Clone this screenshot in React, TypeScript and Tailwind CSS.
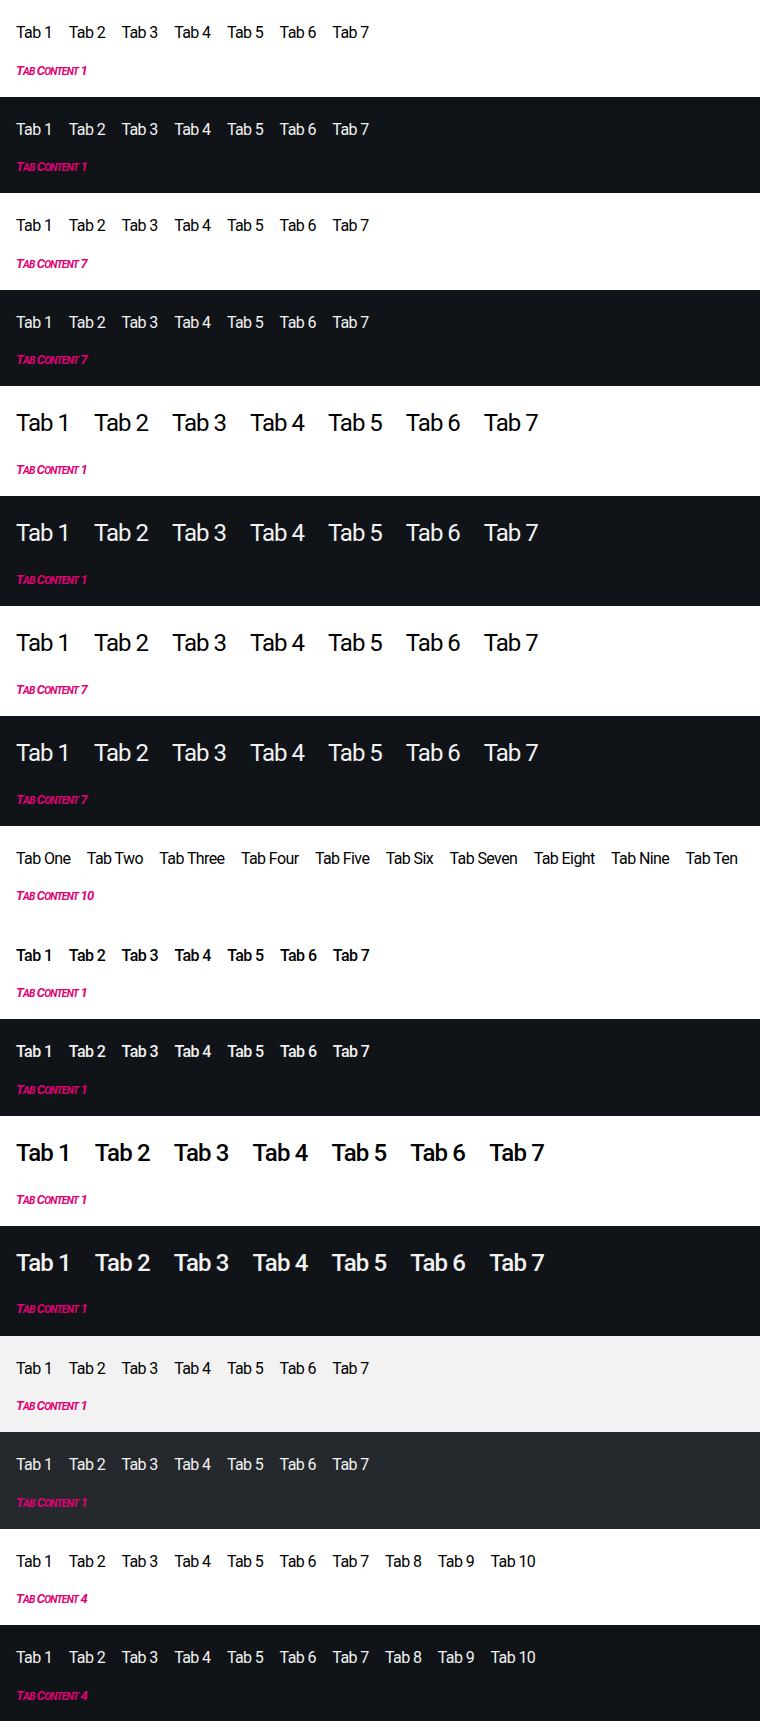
import React from "react";

type Variant = {
  bg: string;
  text: string;
  large?: boolean;
  bold?: boolean;
  labels: string[];
  content: string;
};

const seven = ["Tab 1", "Tab 2", "Tab 3", "Tab 4", "Tab 5", "Tab 6", "Tab 7"];
const ten = [...seven, "Tab 8", "Tab 9", "Tab 10"];
const words = [
  "Tab One",
  "Tab Two",
  "Tab Three",
  "Tab Four",
  "Tab Five",
  "Tab Six",
  "Tab Seven",
  "Tab Eight",
  "Tab Nine",
  "Tab Ten",
];

const LIGHT = "bg-white";
const DARK = "bg-[#101418]";
const LT = "text-[#000000]";
const DT = "text-[#f2f2f2]";

const sections: Variant[] = [
  { bg: LIGHT, text: LT, labels: seven, content: "Tab Content 1" },
  { bg: DARK, text: DT, labels: seven, content: "Tab Content 1" },
  { bg: LIGHT, text: LT, labels: seven, content: "Tab Content 7" },
  { bg: DARK, text: DT, labels: seven, content: "Tab Content 7" },
  { bg: LIGHT, text: LT, large: true, labels: seven, content: "Tab Content 1" },
  { bg: DARK, text: DT, large: true, labels: seven, content: "Tab Content 1" },
  { bg: LIGHT, text: LT, large: true, labels: seven, content: "Tab Content 7" },
  { bg: DARK, text: DT, large: true, labels: seven, content: "Tab Content 7" },
  { bg: LIGHT, text: LT, labels: words, content: "Tab Content 10" },
  { bg: LIGHT, text: LT, bold: true, labels: seven, content: "Tab Content 1" },
  { bg: DARK, text: DT, bold: true, labels: seven, content: "Tab Content 1" },
  { bg: LIGHT, text: LT, bold: true, large: true, labels: seven, content: "Tab Content 1" },
  { bg: DARK, text: DT, bold: true, large: true, labels: seven, content: "Tab Content 1" },
  { bg: "bg-[#f2f2f2]", text: LT, labels: seven, content: "Tab Content 1" },
  { bg: "bg-[#25292d]", text: DT, labels: seven, content: "Tab Content 1" },
  { bg: LIGHT, text: LT, labels: ten, content: "Tab Content 4" },
  { bg: DARK, text: DT, labels: ten, content: "Tab Content 4" },
];

function SmallCaps({ text }: { text: string }) {
  const parts: React.ReactNode[] = [];
  let buf = "";
  let key = 0;
  const flush = () => {
    if (buf) {
      parts.push(
        <span key={key++} className="text-[10.4px] leading-none">
          {buf.toUpperCase()}
        </span>
      );
      buf = "";
    }
  };
  for (const ch of text) {
    if (ch >= "a" && ch <= "z") {
      buf += ch;
    } else {
      flush();
      parts.push(
        <span key={key++} className="leading-none">
          {ch}
        </span>
      );
    }
  }
  flush();
  return <>{parts}</>;
}

function tabClass(v: Variant) {
  if (v.large) {
    return v.bold
      ? "text-[24px] leading-8 py-1 tracking-[-0.85px] font-medium"
      : "text-[24px] leading-8 py-1 tracking-[-1px] font-normal";
  }
  return v.bold
    ? "text-[16px] leading-6 py-1 tracking-[-0.6px] font-medium"
    : "text-[16px] leading-6 py-1 tracking-[-0.6px] font-normal";
}

function TabSection({ v }: { v: Variant }) {
  const gap = v.large ? "gap-6" : "gap-[16.4px]";
  return (
    <section className={`${v.bg} pt-[17px] pb-[16.1px] pl-4`}>
      <div className={`flex flex-row whitespace-nowrap ${gap}`} role="tablist">
        {v.labels.map((l) => (
          <button
            key={l}
            role="tab"
            className={`${v.text} ${tabClass(v)} bg-transparent px-0`}
          >
            {l}
          </button>
        ))}
      </div>
      <div
        className={`${
          v.large ? "mt-[16.8px]" : "mt-[11.5px]"
        } h-5 overflow-visible text-[13px] leading-5 font-bold italic tracking-[-0.85px] text-[#e20074]`}
      >
        <SmallCaps text={v.content} />
      </div>
    </section>
  );
}

export default function App() {
  return (
    <div className="w-[760px] font-['Roboto','Liberation_Sans',sans-serif]">
      {sections.map((v, i) => (
        <TabSection key={i} v={v} />
      ))}
    </div>
  );
}
